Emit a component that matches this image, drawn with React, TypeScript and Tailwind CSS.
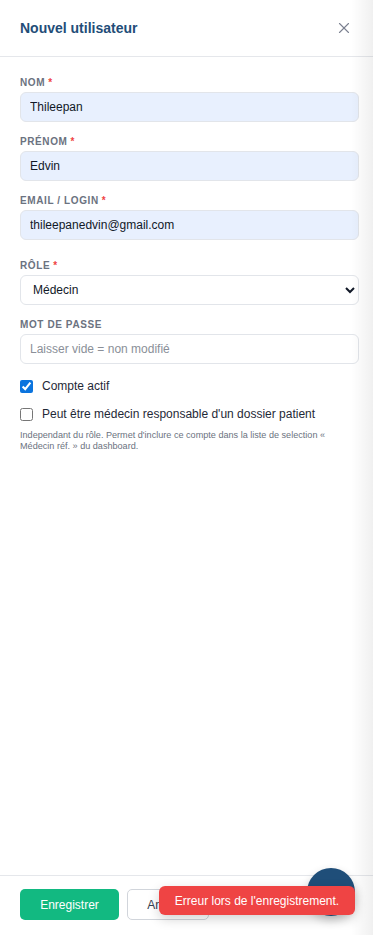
import { X } from "lucide-react";

const labelCls = "mb-[3px] block text-[10px] font-bold uppercase tracking-[0.06em] text-[#6b7280] leading-[12px]";
const inputCls =
  "h-[30px] w-full rounded-[6px] border border-[#e2e5ea] px-[9px] text-[12px] text-[#111827] outline-none placeholder:text-[#8a8f98]";

function Label({ text, required }: { text: string; required?: boolean }) {
  return (
    <label className={labelCls}>
      {text}
      {required && <span className="ml-[3px] text-[#ef4444]">*</span>}
    </label>
  );
}

export default function App() {
  return (
    <div className="relative flex h-[935px] w-[373px] flex-col overflow-hidden bg-white font-[Liberation_Sans,Arial,sans-serif]">
      {/* header */}
      <div className="flex h-[57px] shrink-0 items-center justify-between border-b border-[#e5e7eb] pl-[20px] pr-[20px]">
        <h2 className="text-[14px] font-bold text-[#234d78]">Nouvel utilisateur</h2>
        <button type="button" aria-label="Fermer" className="text-[#7b8190]">
          <X className="h-[18px] w-[18px]" strokeWidth={1.5} />
        </button>
      </div>

      {/* body */}
      <div className="flex flex-1 flex-col gap-[14px] pl-[20px] pr-[14px] pt-[20px]">
        <div>
          <Label text="Nom" required />
          <input className={`${inputCls} bg-[#e8f0fe]`} defaultValue="Thileepan" />
        </div>
        <div>
          <Label text="Prénom" required />
          <input className={`${inputCls} bg-[#e8f0fe]`} defaultValue="Edvin" />
        </div>
        <div>
          <Label text="Email / Login" required />
          <input className={`${inputCls} bg-[#e8f0fe]`} defaultValue="thileepanedvin@gmail.com" />
        </div>
        <div className="mt-[6px]">
          <Label text="Rôle" required />
          <select className="h-[30px] w-full rounded-[6px] border border-[#e2e5ea] bg-white px-[8px] text-[12px] text-[#111827] outline-none" defaultValue="medecin">
            <option value="medecin">Médecin</option>
          </select>
        </div>
        <div>
          <Label text="Mot de passe" />
          <input className={`${inputCls} bg-white`} placeholder="Laisser vide = non modifié" />
        </div>
        <div className="flex flex-col gap-[12px]">
          <label className="flex h-[16px] items-center gap-[9px] text-[12px] text-[#1f2937]">
            <input type="checkbox" defaultChecked className="m-0 h-[13px] w-[13px] accent-[#0b74de]" />
            Compte actif
          </label>
          <div>
            <label className="flex h-[16px] items-center gap-[9px] text-[12px] text-[#1f2937]">
              <input type="checkbox" className="m-0 h-[13px] w-[13px]" />
              Peut être médecin responsable d'un dossier patient
            </label>
            <p className="mt-[8px] text-[9.1px] leading-[11px] text-[#6b7280]">
              Independant du rôle. Permet d'inclure ce compte dans la liste de selection « Médecin réf. » du dashboard.
            </p>
          </div>
        </div>
      </div>

      {/* footer */}
      <div className="flex h-[60px] shrink-0 items-center gap-[8px] border-t border-[#e5e7eb] px-[20px] pb-[2px]">
        <button type="button" className="h-[31px] w-[99px] rounded-[5px] bg-[#12b981] text-[12px] text-white">
          Enregistrer
        </button>
        <button type="button" className="h-[31px] w-[82px] rounded-[5px] border border-[#d1d5db] bg-white text-[12px] text-[#374151]">
          Annuler
        </button>
      </div>

      {/* floating button */}
      <div className="absolute left-[307px] top-[868px] h-[48px] w-[48px] rounded-full bg-[#1f4e79] shadow-[0_4px_10px_rgba(0,0,0,0.2)]" />

      {/* toast */}
      <div className="absolute left-[159px] top-[886px] flex h-[29px] w-[196px] items-center justify-center rounded-[6px] bg-[#ef4444] text-[12px] text-white shadow-[0_4px_12px_rgba(0,0,0,0.18)]">
        Erreur lors de l'enregistrement.
      </div>

      {/* right edge shade */}
      <div className="pointer-events-none absolute right-0 top-0 h-full w-[22px] bg-gradient-to-r from-transparent to-[rgba(0,0,0,0.06)]" />
    </div>
  );
}
